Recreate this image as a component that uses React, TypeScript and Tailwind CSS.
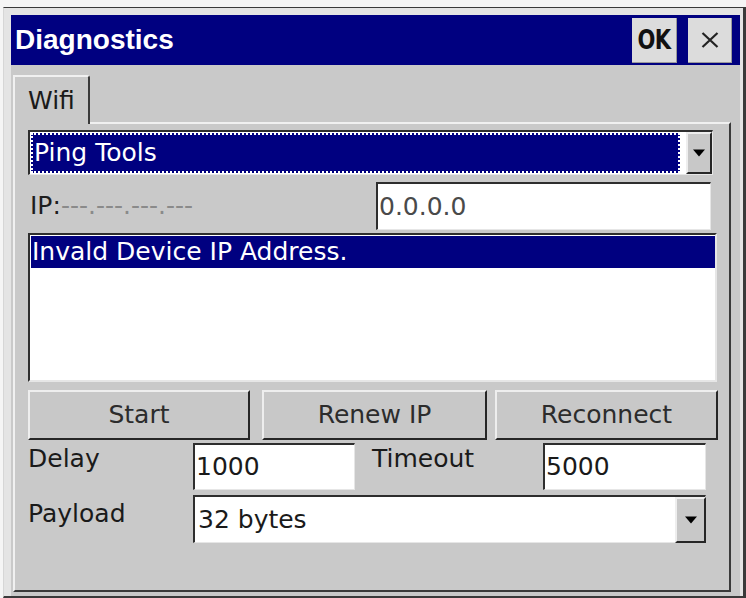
import React from 'react';

const sunken =
  "bg-white border-t-2 border-l-2 border-r border-b border-t-[#2e2e2e] border-l-[#2e2e2e] border-r-[#e6e6e6] border-b-[#e6e6e6]";
const raised =
  "bg-[#c8c8c8] border-t-2 border-l-2 border-r-2 border-b-2 border-t-[#eeeeee] border-l-[#eeeeee] border-r-[#262626] border-b-[#262626]";

const Arrow = () => (
  <svg width="12" height="8" viewBox="0 0 12 8">
    <path d="M0 0.5h12L6 7.5z" fill="#000" />
  </svg>
);

const DropButton: React.FC<{ className?: string }> = ({ className = '' }) => (
  <div className={`flex items-center justify-center ${raised} ${className}`}>
    <Arrow />
  </div>
);

const PushButton: React.FC<{ label: string; className?: string }> = ({ label, className = '' }) => (
  <div className={`flex items-center justify-center text-[#2c2c2c] ${raised} ${className}`}>{label}</div>
);

export default function App() {
  return (
    <div className="w-[746px] h-[598px] bg-[#f5f5f5] pl-[3px] pt-[7px] overflow-hidden font-['DejaVu_Sans',sans-serif] text-[25px] leading-[30px]">
      <div className="w-[743px] h-[591px] flex flex-col bg-[#e4e4e4] border-t border-l border-t-[#3a3a3a] border-l-[#d6d6d6] border-r-[3px] border-b-2 border-r-[#3a3a3a] border-b-[#3a3a3a] pt-[7px] pl-[7px] pr-[3px]">
        {/* title bar */}
        <div className="h-[50px] bg-[#000080] flex items-center pl-[4px] pr-[8px]">
          <span className="text-white font-bold text-[28px] font-['Liberation_Sans',sans-serif]">Diagnostics</span>
          <div className="ml-auto w-[45px] h-[45px] bg-[#dcdcdc] border-r border-b border-r-[#9a9a9a] border-b-[#9a9a9a] flex items-center justify-center">
            <span className="font-bold text-[27px] text-[#111] tracking-[-1px] scale-x-[0.78] font-['DejaVu_Sans',sans-serif]">OK</span>
          </div>
          <div className="ml-[11px] w-[44px] h-[45px] bg-[#dcdcdc] border-r border-b border-r-[#9a9a9a] border-b-[#9a9a9a] flex items-center justify-center">
            <svg width="18" height="16" viewBox="0 0 18 16">
              <path d="M1.5 1L16.5 15M16.5 1L1.5 15" stroke="#222" strokeWidth="2.2" />
            </svg>
          </div>
        </div>

        {/* body */}
        <div className="flex-1 bg-[#c9c9c9] flex flex-col pl-[2px] pt-[10px] pb-[4px]">
          <div className="relative z-10 -mb-[2px] w-[77px] h-[49px] bg-[#c9c9c9] border-t-2 border-l-2 border-r-2 border-t-[#f0f0f0] border-l-[#f0f0f0] border-r-[#3a3a3a] rounded-tr-[3px] pl-[13px] pt-[9px] text-[#1a1a1a]">
            Wifi
          </div>
          <div className="flex-1 w-[718px] border-2 border-t-[#f0f0f0] border-l-[#f0f0f0] border-r-[#3a3a3a] border-b-[#3a3a3a] pl-[13px] pt-[6px] flex flex-col">
            {/* Ping Tools combo */}
            <div className={`w-[685px] h-[45px] flex p-[1px] ${sunken}`}>
              <div className="flex-1 bg-[#000080] border-2 border-dotted border-white text-white pl-[1px] flex items-center">
                Ping Tools
              </div>
              <DropButton className="w-[26px] ml-[6px] -mt-[1px] -mr-[1px] -mb-[1px]" />
            </div>

            {/* IP row */}
            <div className="mt-[7px] h-[48px] flex">
              <div className="w-[348px] flex items-center pl-[2px]">
                <span className="text-[#1e1e1e]">IP:</span>
                <span className="text-[#8a8a8a]">---.---.---.---</span>
              </div>
              <div className={`w-[335px] flex items-center pl-[1px] text-[#4a4a4a] ${sunken}`}>0.0.0.0</div>
            </div>

            {/* list */}
            <div className="mt-[3px] w-[689px] h-[149px] bg-white border-t-2 border-l-2 border-r-2 border-b-2 border-t-[#2e2e2e] border-l-[#2e2e2e] border-r-[#e6e6e6] border-b-[#e6e6e6] pt-[1px] pl-[1px]">
              <div className="h-[32px] bg-[#000080] text-white pl-[1px] flex items-center">Invald Device IP Address.</div>
            </div>

            {/* buttons */}
            <div className="mt-[8px] h-[50px] flex">
              <PushButton label="Start" className="w-[222px]" />
              <PushButton label="Renew IP" className="w-[225px] ml-[12px]" />
              <PushButton label="Reconnect" className="w-[223px] ml-[8px]" />
            </div>

            {/* delay / timeout */}
            <div className="mt-[3px] h-[47px] flex text-[#1a1a1a]">
              <div className="w-[165px] pt-[1px]">Delay</div>
              <div className={`w-[162px] flex items-center pl-[1px] ${sunken}`}>1000</div>
              <div className="w-[171px] ml-[17px] pt-[1px]">Timeout</div>
              <div className={`w-[163px] flex items-center pl-[1px] ${sunken}`}>5000</div>
            </div>

            {/* payload */}
            <div className="mt-[5px] h-[48px] flex text-[#1a1a1a]">
              <div className="w-[165px] pt-[4px]">Payload</div>
              <div className={`w-[513px] flex ${sunken}`}>
                <div className="flex-1 flex items-center pl-[3px]">32 bytes</div>
                <DropButton className="w-[31px] -mr-[1px] -mb-[1px]" />
              </div>
            </div>
          </div>
        </div>
      </div>
    </div>
  );
}
